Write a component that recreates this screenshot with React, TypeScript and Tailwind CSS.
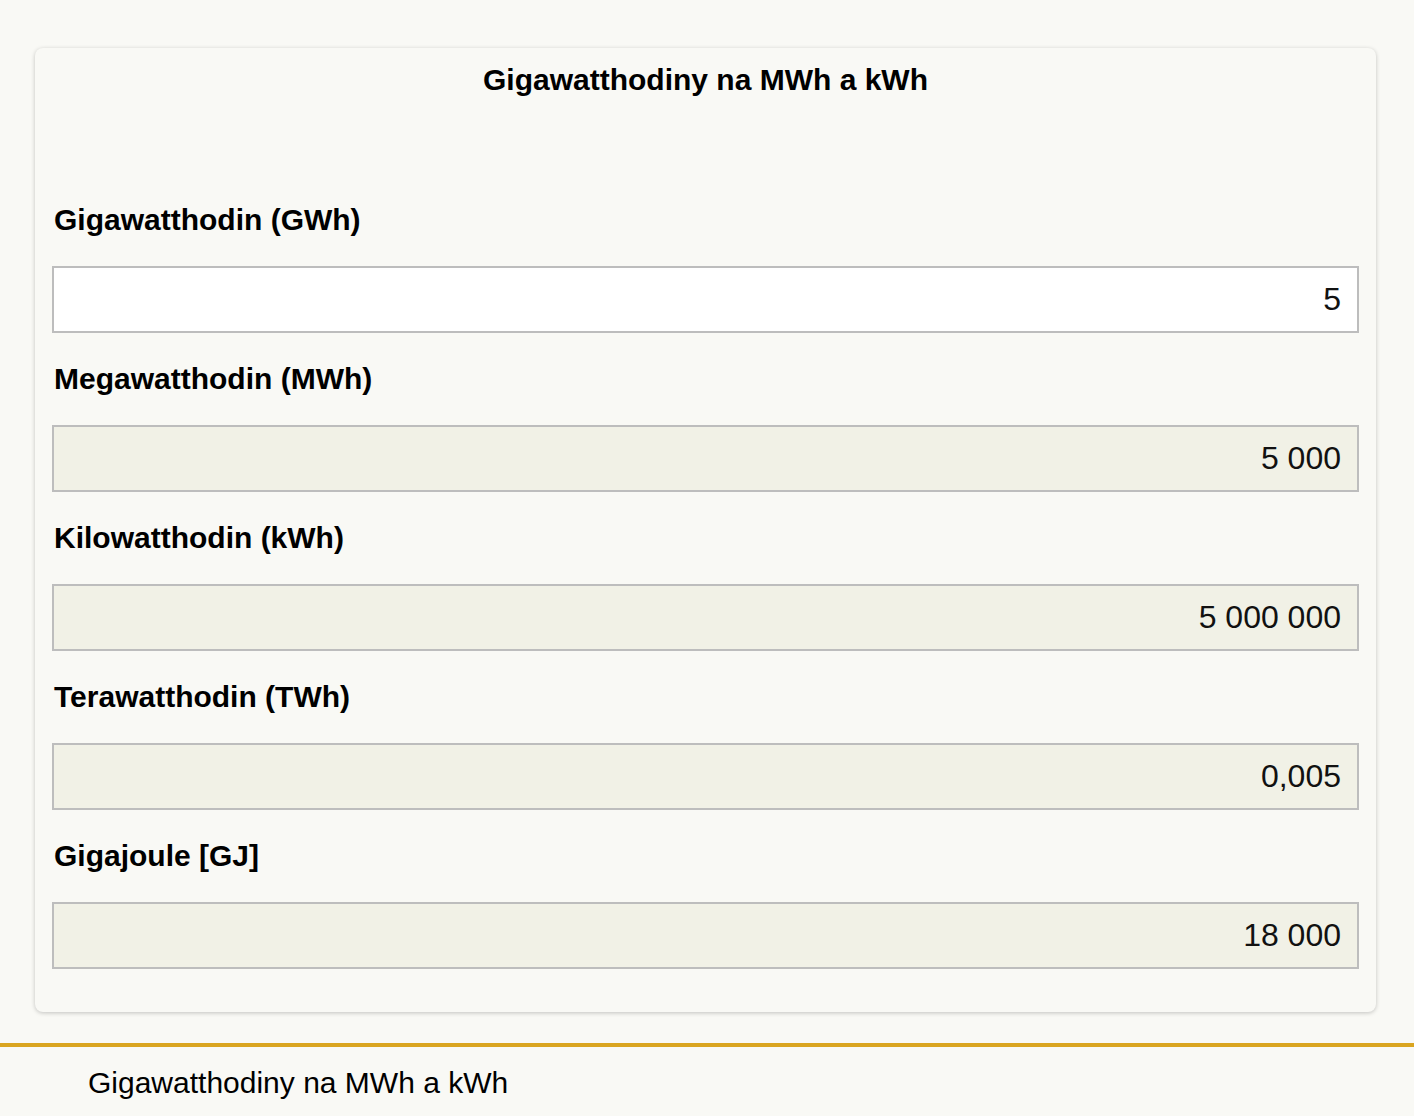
const fields = [
  { label: "Gigawatthodin (GWh)", value: "5", editable: true },
  { label: "Megawatthodin (MWh)", value: "5 000", editable: false },
  { label: "Kilowatthodin (kWh)", value: "5 000 000", editable: false },
  { label: "Terawatthodin (TWh)", value: "0,005", editable: false },
  { label: "Gigajoule [GJ]", value: "18 000", editable: false },
];

export default function App() {
  return (
    <div className="min-h-[1116px] bg-[#f9f9f5] text-black font-['Liberation_Sans',Arial,sans-serif]">
      <div className="pt-[48px] pl-[35px] pr-[38px]">
        <div className="rounded-lg bg-[#f9f9f5] shadow-[0_1px_4px_rgba(0,0,0,0.22)] px-[17px] pt-[16px] pb-[43px]">
          <h1 className="text-center text-[30px] leading-[32px] font-bold">Gigawatthodiny na MWh a kWh</h1>
          <div className="mt-[108px] flex flex-col gap-[30px]">
            {fields.map((f) => (
              <div key={f.label} className="flex flex-col gap-[30px]">
                <label className="text-[30px] leading-[32px] font-bold pl-[2px]">{f.label}</label>
                <input
                  readOnly
                  value={f.value}
                  className={
                    "h-[67px] w-full border-2 border-[#bdbdbd] text-right pr-[16px] text-[32px] text-[#111] outline-none " +
                    (f.editable ? "bg-white" : "bg-[#f1f1e6]")
                  }
                />
              </div>
            ))}
          </div>
        </div>
      </div>
      <div className="mt-[31px] border-t-4 border-[#daa520] pl-[88px] pt-[20px]">
        <p className="text-[30px] leading-[32px]">Gigawatthodiny na MWh a kWh</p>
      </div>
    </div>
  );
}
